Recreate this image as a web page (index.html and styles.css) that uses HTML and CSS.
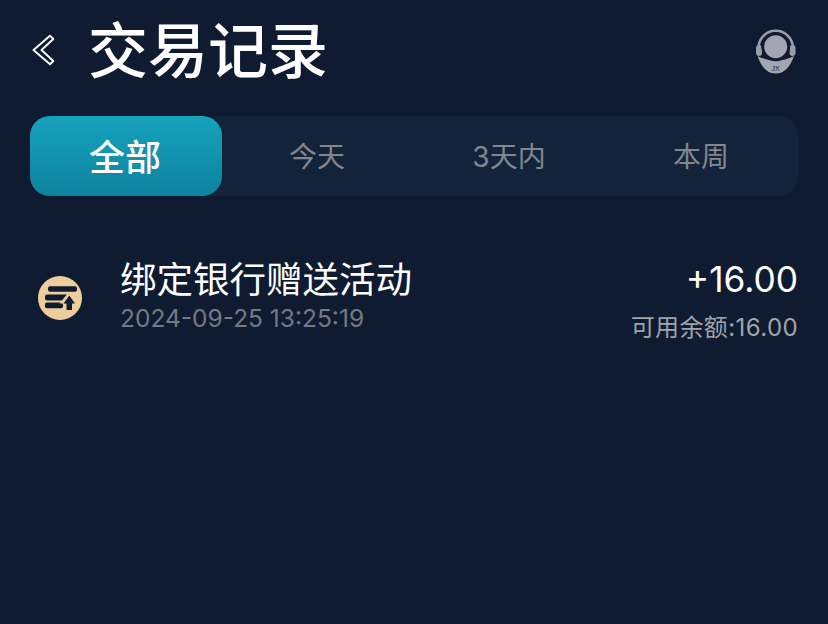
FILE: index.html
```html
<!DOCTYPE html>
<html lang="zh-CN">
<head>
    <meta charset="UTF-8">
    <meta name="viewport" content="width=device-width, initial-scale=1.0">
    <title>交易记录</title>
    <link rel="stylesheet" href="styles.css">
</head>
<body>
    <div class="page">
        <div class="header">
            <svg class="back-icon" width="26" height="34" viewBox="0 0 26 34">
                <path d="M3.500 17 L20 2.800 L23.300 6 L11.500 17 L23.300 28 L20 31.200 Z" fill="none" stroke="#fff" stroke-width="1.900" stroke-linejoin="round"/>
            </svg>
            <h1 class="title">交易记录</h1>
            <svg class="service-icon" width="44" height="48" viewBox="0 0 44 48">
                <path d="M4.500 22 V20 A17.200 17.200 0 0 1 38.900 20 V22" fill="none" stroke="#9a9ea9" stroke-width="2.600"/>
                <rect x="2" y="17" width="6" height="11" rx="3" fill="#9a9ea9"/>
                <rect x="35.500" y="17" width="6" height="11" rx="3" fill="#9a9ea9"/>
                <path d="M3.500 28 Q21.700 37 40 28 Q34 45.500 21.700 45.500 Q9.500 45.500 3.500 28 Z" fill="#a3a6b1"/>
                <circle cx="21.700" cy="18.700" r="13" fill="#a3a6b1" stroke="#0f1b31" stroke-width="3"/>
                <text x="21.700" y="43" class="service-text">JX</text>
            </svg>
        </div>

        <div class="tabs">
            <div class="tab active">全部</div>
            <div class="tab">今天</div>
            <div class="tab">3天内</div>
            <div class="tab">本周</div>
        </div>

        <div class="record">
            <svg class="record-icon" width="44" height="44" viewBox="0 0 44 44">
                <circle cx="22" cy="22" r="22" fill="#ecce9c"/>
                <rect x="10" y="10.200" width="29" height="5.600" rx="2" fill="#0f1b31"/>
                <rect x="7" y="18.400" width="23" height="6" rx="2" fill="#0f1b31"/>
                <rect x="7" y="26.400" width="18" height="5.800" rx="2" fill="#0f1b31"/>
                <path d="M31.300 15.500 L41 27.500 H37 V36 H26 V27.500 H21.500 Z" fill="#ecce9c"/>
                <path d="M31.300 19.500 L37 27.500 H34 V34 H28.500 V27.500 H25.500 Z" fill="#0f1b31"/>
            </svg>
            <div class="record-main">
                <div class="record-name">绑定银行赠送活动</div>
                <div class="record-time">2024-09-25 13:25:19</div>
            </div>
            <div class="record-side">
                <div class="record-amount">+16.00</div>
                <div class="record-balance">可用余额:16.00</div>
            </div>
        </div>
    </div>
</body>
</html>
```
FILE: styles.css
```css
body {
    margin: 0;
    background-color: #0f1b31;
    font-family: "Inter", "Noto Sans CJK SC", sans-serif;
    color: #fff;
}
.page {
    height: 624px;
    padding: 0 30px;
    box-sizing: border-box;
    overflow: hidden;
}
.header {
    display: flex;
    align-items: center;
    height: 100px;
}
.back-icon {
    margin-right: 32px;
}
.title {
    flex: 1;
    margin: 2px 0 0;
    font-size: 60px;
    line-height: 100px;
    font-weight: 500;
}
.service-icon {
    margin-top: 4px;
}
.service-text {
    font-family: "Liberation Sans", sans-serif;
    font-size: 7px;
    fill: #0f1b31;
    text-anchor: middle;
}
.tabs {
    display: flex;
    height: 80px;
    margin-top: 16px;
    border-radius: 20px;
    background-color: #13233a;
}
.tab {
    flex: 1;
    display: flex;
    align-items: center;
    justify-content: center;
    padding: 0 2px 2px 0;
    border-radius: 20px;
    font-size: 28px;
    color: #82868f;
}
.tab.active {
    background: linear-gradient(180deg, #16a2bd, #0e829e);
    color: #fff;
    font-size: 36px;
    font-weight: 500;
}
.record {
    display: flex;
    align-items: center;
    margin-top: 56px;
    height: 92px;
}
.record-icon {
    margin-left: 8px;
    margin-right: 38px;
}
.record-main {
    flex: 1;
    margin-top: -10px;
}
.record-name {
    font-size: 36.500px;
    line-height: 50px;
}
.record-time {
    font-size: 24.500px;
    line-height: 26px;
    color: #757985;
}
.record-side {
    margin-top: 10px;
    text-align: right;
}
.record-amount {
    font-size: 35.300px;
    line-height: 50px;
}
.record-balance {
    font-size: 24px;
    line-height: 46px;
    letter-spacing: 0.400px;
    color: #a0a3aa;
}
```
